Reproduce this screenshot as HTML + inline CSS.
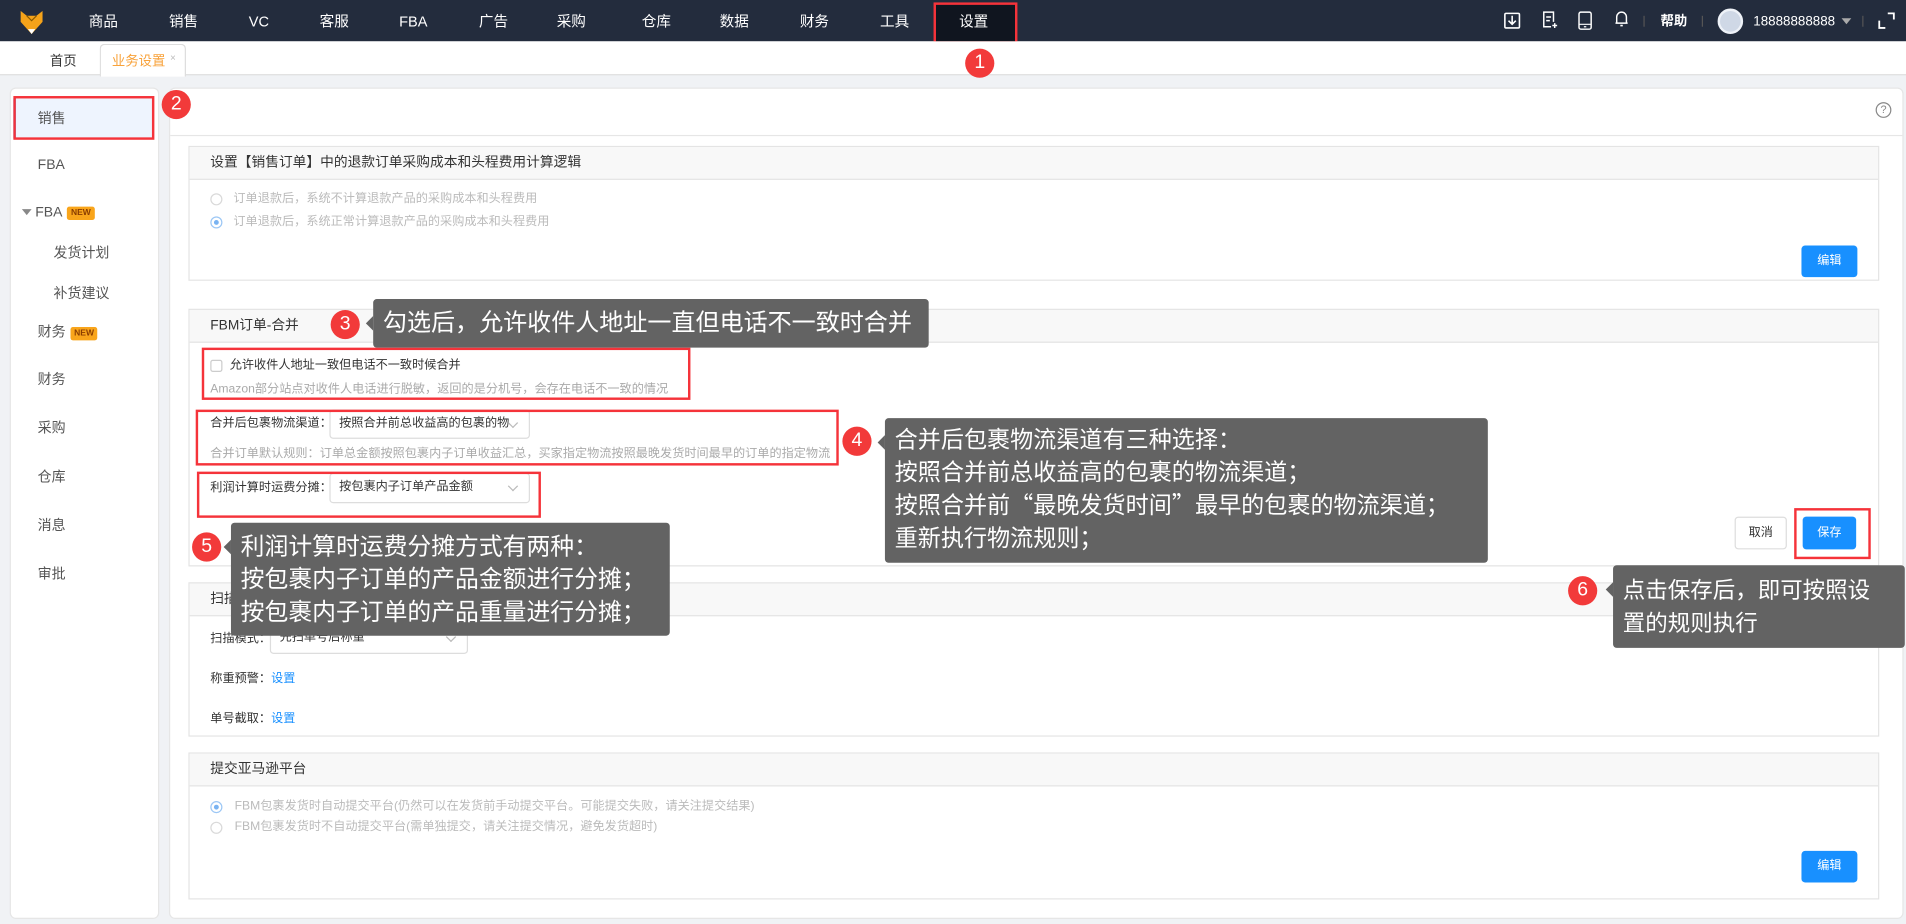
<!DOCTYPE html>
<html><head><meta charset="utf-8">
<style>
*{box-sizing:border-box;margin:0;padding:0}
html,body{width:1906px;height:924px;overflow:hidden;background:#f0f2f5}
body{font-family:"Liberation Sans","Noto Sans CJK SC",sans-serif;color:#333}
#w{position:absolute;left:0;top:0;width:1568px;height:760px;transform:scale(1.21556);transform-origin:0 0;background:#f0f2f5}
.a{position:absolute}
.nav{left:0;top:0;width:1568px;height:34px;background:#232c3d;color:#fff;font-size:12px}
.nav span{position:absolute;top:0;line-height:36px;transform:translateX(-50%);white-space:nowrap}
.tabs{left:0;top:34px;width:1568px;height:28px;background:#fff;border-bottom:1px solid #ddd;font-size:11px}
.side{left:8px;top:72px;width:123px;height:684px;background:#fff;border:1px solid #e6e6e6;border-radius:5px;font-size:11.5px;color:#555}
.side div{position:absolute;left:22px;line-height:14px}
.new{display:inline-block;background:#f9a51b;color:#8a3d00;font-size:7px;font-weight:bold;padding:1px 3px;border-radius:2px;vertical-align:1px;margin-left:4px;line-height:9px}
.main{left:139px;top:72px;width:1427px;height:684px;background:#fff;border:1px solid #e6e6e6;border-radius:5px}
.sec{position:absolute;left:155px;width:1391px;border:1px solid #e4e4e4;background:#fff}
.sh{height:27px;background:#f8f8f8;border-bottom:1px solid #e4e4e4;font-size:11.3px;line-height:27px;color:#333;padding:0 0 0 17px}
.t{position:absolute;font-size:10px;line-height:12px;white-space:nowrap}
.g{color:#bbb}
.radio{position:absolute;width:10px;height:10px;border:1px solid #d9d9d9;border-radius:50%}
.radio.on{border-color:#9cc7f5}
.radio.on:after{content:"";position:absolute;left:2px;top:2px;width:4px;height:4px;border-radius:50%;background:#79b3f2}
.btn{position:absolute;background:#1890ff;color:#fff;font-size:10px;border-radius:3px;text-align:center}
.sel{position:absolute;border:1px solid #ddd;border-radius:3px;background:#fff;font-size:10px;line-height:12px;color:#333;padding:5px 0 0 7px;white-space:nowrap;overflow:hidden}
.sel:after{content:"";position:absolute;right:10px;top:7px;width:5px;height:5px;border-right:1px solid #bbb;border-bottom:1px solid #bbb;transform:rotate(45deg)}
.rb{position:absolute;border:2px solid #f5333a}
.c{position:absolute;width:24px;height:24px;border-radius:50%;background:#f23a3a;color:#fff;font-size:16px;text-align:center;line-height:24px}
.tip{position:absolute;background:#636363;color:#fff;border-radius:3px;font-size:17px;line-height:24px;padding:0 8px;white-space:nowrap}
.tip:before{content:"";position:absolute;left:-6px;top:14px;border:6px solid transparent;border-left:0;border-right-color:#636363}
.q{font-family:"Noto Sans CJK SC",sans-serif;line-height:0}
</style></head><body><div id="w">
<div class="a nav">
<svg class="a" style="left:16px;top:9px" width="20" height="19" viewBox="0 0 20 19"><path d="M1 0L6 4H14L19 0V9L10 19L1 9Z" fill="#f5a31a"/><path d="M6 4L10 8L14 4" stroke="#8a5a00" stroke-width="1" fill="none"/><path d="M7 15L10 19L13 15Z" fill="#fff"/></svg>
<span style="left:85px">商品</span><span style="left:151px">销售</span><span style="left:213px">VC</span><span style="left:275px">客服</span><span style="left:340px">FBA</span><span style="left:406px">广告</span><span style="left:470px">采购</span><span style="left:540px">仓库</span><span style="left:604px">数据</span><span style="left:670px">财务</span><span style="left:736px">工具</span>
<div class="a" style="left:770px;top:3px;width:66px;height:31px;background:#10151f"></div>
<span style="left:801px">设置</span>
<div class="a" style="left:768px;top:2px;width:69px;height:34px;border:2px solid #f5333a"></div>
<svg class="a" style="left:1237px;top:10px" width="14" height="14"><rect x="1" y="1" width="12" height="12" rx="1" fill="none" stroke="#fff" stroke-width="1.3"/><path d="M7 3V10M4 7L7 10L10 7" stroke="#fff" stroke-width="1.3" fill="none"/></svg>
<svg class="a" style="left:1268px;top:9px" width="14" height="15"><path d="M10 9V1H2V13H8" fill="none" stroke="#fff" stroke-width="1.2"/><path d="M4 5H8M4 8H7M11 10V14M9 12H13" stroke="#fff" stroke-width="1.2"/></svg>
<svg class="a" style="left:1298px;top:9px" width="12" height="16"><rect x="1" y="1" width="10" height="14" rx="1.5" fill="none" stroke="#fff" stroke-width="1.2"/><path d="M1 11H11M5 13H7" stroke="#fff" stroke-width="1"/></svg>
<svg class="a" style="left:1327px;top:8px" width="14" height="15"><path d="M3 11V6A4 4 0 0 1 11 6V11H12H2Z" fill="none" stroke="#fff" stroke-width="1.2"/><path d="M6 13H8" stroke="#fff" stroke-width="1.3"/></svg>
<div class="a" style="left:1352px;top:13px;width:1px;height:9px;background:#555"></div>
<span style="left:1377px;font-size:11px;font-weight:bold">帮助</span>
<div class="a" style="left:1400px;top:13px;width:1px;height:9px;background:#555"></div>
<div class="a" style="left:1413px;top:7px;width:21px;height:21px;border-radius:50%;background:#cfd8e6;border:2px solid #eef2f8"></div>
<span style="left:1476px;font-size:11px">18888888888</span>
<div class="a" style="left:1515px;top:15px;border:4px solid transparent;border-top:5px solid #aaa"></div>
<div class="a" style="left:1532px;top:13px;width:1px;height:9px;background:#555"></div>
<svg class="a" style="left:1545px;top:10px" width="14" height="14"><path d="M1 7V13H6M8 1H13V6" stroke="#fff" stroke-width="1.5" fill="none"/></svg>
</div>
<div class="a tabs">
<div class="a" style="left:41px;top:8px">首页</div>
<div class="a" style="left:82px;top:2px;width:71px;height:27px;background:#fff;border:1px solid #ddd;border-bottom:none;border-radius:4px 4px 0 0"></div>
<div class="a" style="left:92px;top:8px;color:#f8a23a">业务设置</div>
<div class="a" style="left:140px;top:9px;color:#bbb;font-size:8px">×</div>
</div>
<div class="a side">
<div style="left:2px;top:8px;width:116px;height:33px;background:#eef4fe;border-left:2px solid #1890ff"></div>
<div style="top:18px">销售</div>
<div style="top:56px">FBA</div>
<div style="left:9px;top:95px"><span style="display:inline-block;border:4px solid transparent;border-top:5px solid #888;vertical-align:-3px;margin-right:3px"></span>FBA<span class="new">NEW</span></div>
<div style="left:35px;top:129px">发货计划</div>
<div style="left:35px;top:162px">补货建议</div>
<div style="top:194px">财务<span class="new">NEW</span></div>
<div style="top:233px">财务</div>
<div style="top:273px">采购</div>
<div style="top:313px">仓库</div>
<div style="top:353px">消息</div>
<div style="top:393px">审批</div>
</div>
<div class="rb" style="left:11px;top:79px;width:116px;height:36px"></div>
<div class="a main">
<div class="a" style="left:0;top:38px;width:1425px;height:1px;background:#e6e6e6"></div>
<div class="a" style="left:1403px;top:11px;width:13px;height:13px;border:1px solid #888;border-radius:50%;font-size:9px;color:#888;text-align:center;line-height:11px">?</div>
</div>
<div class="sec" style="top:120px;height:111px"><div class="sh">设置【销售订单】中的退款订单采购成本和头程费用计算逻辑</div></div>
<div class="radio" style="left:173px;top:159px"></div><div class="t g" style="left:192px;top:158px">订单退款后，系统不计算退款产品的采购成本和头程费用</div>
<div class="radio on" style="left:173px;top:178px"></div><div class="t g" style="left:192px;top:177px">订单退款后，系统正常计算退款产品的采购成本和头程费用</div>
<div class="btn" style="left:1482px;top:202px;width:46px;height:26px;line-height:26px">编辑</div>

<div class="sec" style="top:254px;height:212px"><div class="sh">FBM订单-合并</div></div>
<div class="a" style="left:173px;top:296px;width:10px;height:10px;border:1px solid #ccc;border-radius:2px"></div>
<div class="t" style="left:189px;top:295px">允许收件人地址一致但电话不一致时候合并</div>
<div class="t g" style="left:173px;top:315px;color:#aaa">Amazon部分站点对收件人电话进行脱敏，返回的是分机号，会存在电话不一致的情况</div>
<div class="t" style="left:173px;top:343px">合并后包裹物流渠道：</div>
<div class="sel" style="left:271px;top:337px;width:165px;height:24px">按照合并前总收益高的包裹的物</div>
<div class="t g" style="left:173px;top:368px;color:#aaa">合并订单默认规则：订单总金额按照包裹内子订单收益汇总，买家指定物流按照最晚发货时间最早的订单的指定物流</div>
<div class="t" style="left:173px;top:396px">利润计算时运费分摊：</div>
<div class="sel" style="left:271px;top:389px;width:165px;height:25px">按包裹内子订单产品金额</div>
<div class="a" style="left:1427px;top:425px;width:43px;height:27px;border:1px solid #ddd;border-radius:3px;font-size:10px;text-align:center;line-height:25px">取消</div>
<div class="btn" style="left:1483px;top:425px;width:44px;height:27px;line-height:27px">保存</div>

<div class="sec" style="top:479px;height:127px"><div class="sh">扫描发货</div></div>
<div class="t" style="left:173px;top:520px">扫描模式：</div>
<div class="sel" style="left:222px;top:513px;width:163px;height:25px">先扫单号后称重</div>
<div class="t" style="left:173px;top:553px">称重预警：<span style="color:#1890ff">设置</span></div>
<div class="t" style="left:173px;top:586px">单号截取：<span style="color:#1890ff">设置</span></div>

<div class="sec" style="top:619px;height:121px"><div class="sh">提交亚马逊平台</div></div>
<div class="radio on" style="left:173px;top:659px"></div><div class="t g" style="left:193px;top:658px">FBM包裹发货时自动提交平台(仍然可以在发货前手动提交平台。可能提交失败，请关注提交结果)</div>
<div class="radio" style="left:173px;top:676px"></div><div class="t g" style="left:193px;top:675px">FBM包裹发货时不自动提交平台(需单独提交，请关注提交情况，避免发货超时)</div>
<div class="btn" style="left:1482px;top:700px;width:46px;height:26px;line-height:26px">编辑</div>

<div class="rb" style="left:166px;top:286px;width:402px;height:43px"></div>
<div class="rb" style="left:161px;top:337px;width:529px;height:46px"></div>
<div class="rb" style="left:162px;top:388px;width:283px;height:38px"></div>
<div class="rb" style="left:1476px;top:418px;width:63px;height:42px"></div>

<div class="c" style="left:794px;top:40px">1</div>
<div class="c" style="left:133px;top:74px">2</div>
<div class="c" style="left:272px;top:255px">3</div>
<div class="c" style="left:693px;top:351px">4</div>
<div class="c" style="left:158px;top:438px">5</div>
<div class="c" style="left:1290px;top:474px">6</div>
<div class="tip" style="left:307px;top:246px;width:457px;height:40px;line-height:40px;font-size:19.8px">勾选后，允许收件人地址一直但电话不一致时合并</div>
<div class="tip" style="left:728px;top:344px;width:496px;height:119px;padding-top:5px;font-size:19px;line-height:27px">合并后包裹物流渠道有三种选择：<br>按照合并前总收益高的包裹的物流渠道；<br>按照合并前<span class="q">“</span>最晚发货时间<span class="q">”</span>最早的包裹的物流渠道；<br>重新执行物流规则；</div>
<div class="tip" style="left:190px;top:430px;width:361px;height:93px;padding-top:7px;font-size:19.6px;line-height:27px">利润计算时运费分摊方式有两种：<br>按包裹内子订单的产品金额进行分摊；<br>按包裹内子订单的产品重量进行分摊；</div>
<div class="tip" style="left:1327px;top:465px;width:240px;height:68px;padding-top:7px;font-size:18.5px;line-height:27px">点击保存后，即可按照设<br>置的规则执行</div>
</div></body></html>
